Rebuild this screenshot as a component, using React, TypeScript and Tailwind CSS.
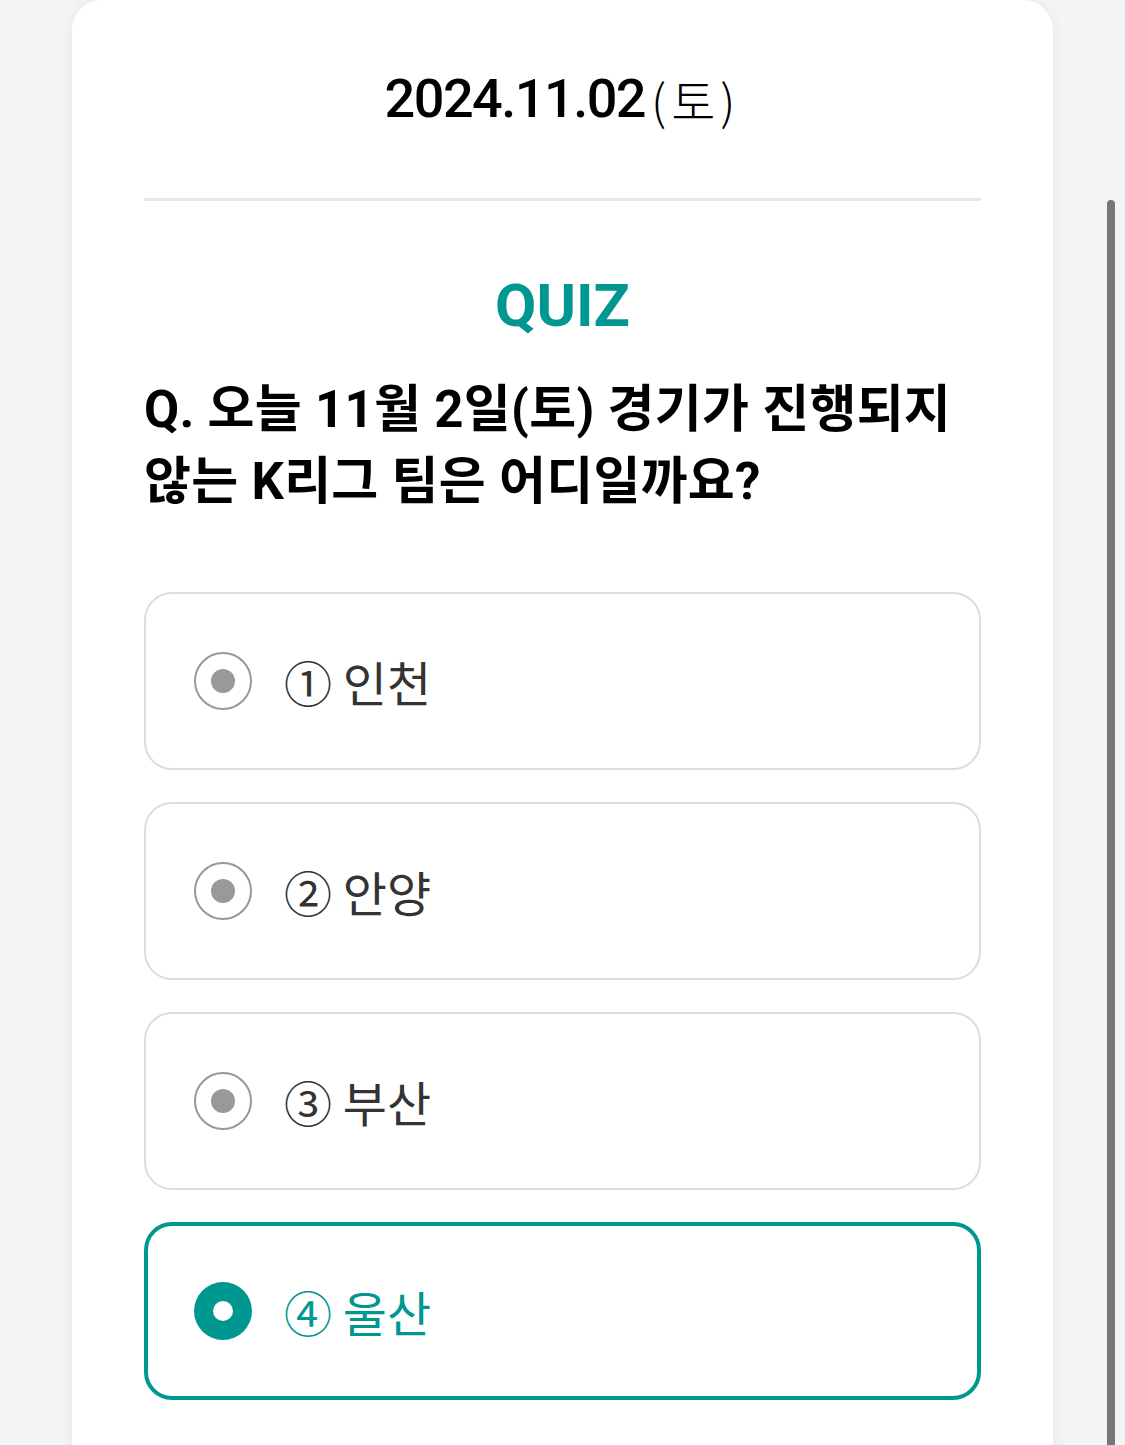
import React from 'react';

const options = [
  { id: 1, label: '① 인천' },
  { id: 2, label: '② 안양' },
  { id: 3, label: '③ 부산' },
  { id: 4, label: '④ 울산' },
];

const Radio = ({ checked }: { checked: boolean }) =>
  checked ? (
    <div className="w-[58px] h-[58px] rounded-full bg-[#009790] flex items-center justify-center shrink-0">
      <div className="w-[20px] h-[20px] rounded-full bg-white" />
    </div>
  ) : (
    <div className="w-[58px] h-[58px] rounded-full border-2 border-[#999] flex items-center justify-center shrink-0">
      <div className="w-[24px] h-[24px] rounded-full bg-[#999]" />
    </div>
  );

export default function App() {
  const selected = 4;

  return (
    <div
      className="min-h-screen bg-[#f3f4f6] px-[72px] relative"
      style={{ fontFamily: 'Roboto, "Noto Sans CJK KR", sans-serif' }}
    >
      <div className="bg-white rounded-t-[30px] shadow-[0_0_14px_rgba(0,0,0,0.06)] px-[72px] pb-[60px]">
        <div className="h-[198px] flex items-center justify-center">
          <span className="text-[54px] font-medium tracking-[-1.5px] text-black leading-none">2024.11.02</span>
          <span className="text-[48px] font-light text-black leading-none ml-[6px] tracking-[5px] font-['Noto_Sans_CJK_KR',sans-serif]">
            (토)
          </span>
        </div>
        <div className="h-[3px] bg-[#e5e7eb]" />

        <h2 className="mt-[69px] text-center text-[60px] leading-[72px] font-bold text-[#009790]">QUIZ</h2>

        <p className="mt-[32px] text-[51px] leading-[72px] font-bold text-black tracking-[0.3px]">
          Q. 오늘 11월 2일(토) 경기가 진행되지
          <br />
          않는 K리그 팀은 어디일까요?
        </p>

        <div className="mt-[74px] flex flex-col gap-[32px]">
          {options.map((o) => {
            const on = o.id === selected;
            return (
              <div
                key={o.id}
                className={
                  on
                    ? 'h-[178px] rounded-[28px] border-4 border-[#009790] flex items-center gap-[32px] pl-[46px]'
                    : 'h-[178px] rounded-[28px] border-2 border-[#dcdcdc] flex items-center gap-[32px] pl-[48px]'
                }
              >
                <Radio checked={on} />
                <span
                  className={
                    on
                      ? "text-[48px] text-[#009790] font-['Noto_Sans_CJK_KR',sans-serif]"
                      : "text-[48px] text-[#333] font-['Noto_Sans_CJK_KR',sans-serif]"
                  }
                >
                  {o.label}
                </span>
              </div>
            );
          })}
        </div>
      </div>

      <div className="absolute left-[1107px] top-[200px] bottom-0 w-[8px] rounded-t-full bg-[#777]" />
    </div>
  );
}
